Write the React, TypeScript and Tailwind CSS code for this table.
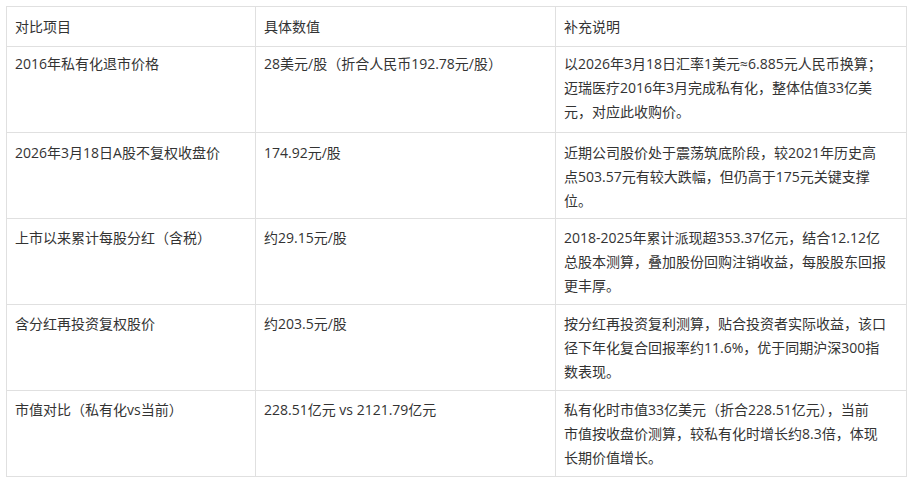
import React from "react";

const rows = [
  {
    item: "2016年私有化退市价格",
    value: "28美元/股（折合人民币192.78元/股）",
    note: ["以2026年3月18日汇率1美元≈6.885元人民币换算；", "迈瑞医疗2016年3月完成私有化，整体估值33亿美", "元，对应此收购价。"],
    pad: "pt-[5px]",
  },
  {
    item: "2026年3月18日A股不复权收盘价",
    value: "174.92元/股",
    note: ["近期公司股价处于震荡筑底阶段，较2021年历史高", "点503.57元有较大跌幅，但仍高于175元关键支撑", "位。"],
    pad: "pt-[8px]",
  },
  {
    item: "上市以来累计每股分红（含税）",
    value: "约29.15元/股",
    note: ["2018-2025年累计派现超353.37亿元，结合12.12亿", "总股本测算，叠加股份回购注销收益，每股股东回报", "更丰厚。"],
    pad: "pt-[7px]",
  },
  {
    item: "含分红再投资复权股价",
    value: "约203.5元/股",
    note: ["按分红再投资复利测算，贴合投资者实际收益，该口", "径下年化复合回报率约11.6%，优于同期沪深300指", "数表现。"],
    pad: "pt-[7px]",
  },
  {
    item: "市值对比（私有化vs当前）",
    value: "228.51亿元 vs 2121.79亿元",
    note: ["私有化时市值33亿美元（折合228.51亿元），当前", "市值按收盘价测算，较私有化时增长约8.3倍，体现", "长期价值增长。"],
    pad: "pt-[7px]",
  },
];

export default function App() {
  return (
    <div
      className="w-[911px] h-[484px] bg-white p-[6px] text-[14px] leading-6 text-[#333]"
      style={{ fontFamily: '"Open Sans", "Noto Sans CJK SC", sans-serif' }}
    >
      <table className="w-[900px] border-collapse table-fixed">
        <colgroup>
          <col className="w-[249px]" />
          <col className="w-[300px]" />
          <col className="w-[351px]" />
        </colgroup>
        <thead>
          <tr className="h-[40px]">
            <th className="border border-[#e0e0e0] px-[8px] py-0 text-left font-normal align-middle">对比项目</th>
            <th className="border border-[#e0e0e0] px-[8px] py-0 text-left font-normal align-middle">具体数值</th>
            <th className="border border-[#e0e0e0] px-[8px] py-0 text-left font-normal align-middle">补充说明</th>
          </tr>
        </thead>
        <tbody>
          {rows.map((r) => (
            <tr key={r.item} className="h-[86px]">
              <td className={`border border-[#e0e0e0] px-[8px] ${r.pad} pb-0 align-top`}>{r.item}</td>
              <td className={`border border-[#e0e0e0] px-[8px] ${r.pad} pb-0 align-top`}>{r.value}</td>
              <td className={`border border-[#e0e0e0] px-[8px] ${r.pad} pb-0 align-top`}>
                {r.note.map((line) => (
                  <div key={line} className="whitespace-nowrap">
                    {line}
                  </div>
                ))}
              </td>
            </tr>
          ))}
        </tbody>
      </table>
    </div>
  );
}
